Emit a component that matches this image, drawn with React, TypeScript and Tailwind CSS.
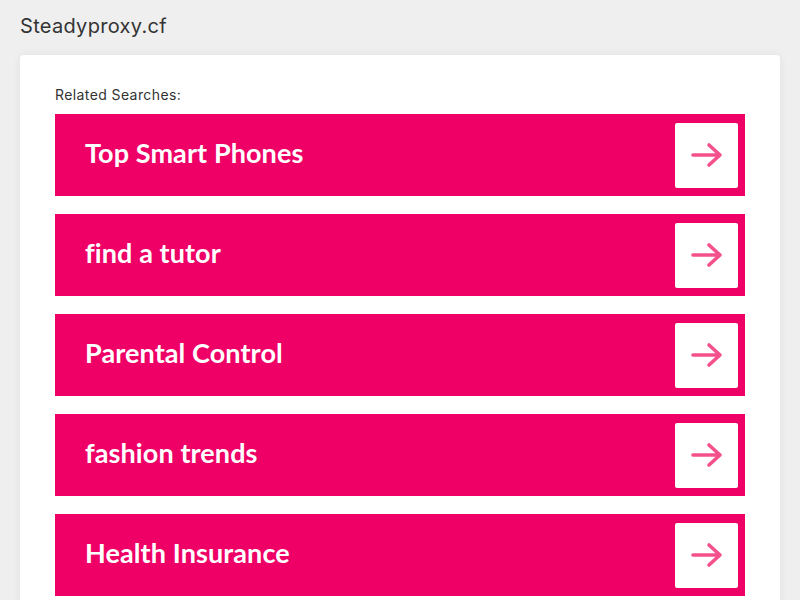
import React from 'react';

const searches = ['Top Smart Phones', 'find a tutor', 'Parental Control', 'fashion trends', 'Health Insurance'];

function Arrow() {
  return (
    <svg width="34" height="26" viewBox="0 0 34 26" fill="none">
      <path d="M3 13H30M19 3L30 13L19 23" stroke="#f4508c" strokeWidth="3.6" strokeLinecap="round" strokeLinejoin="round" />
    </svg>
  );
}

export default function App() {
  return (
    <div className="min-h-[600px] bg-[#efefef] font-['Inter',sans-serif]">
      <div className="h-[55px] px-5 pt-[13px]">
        <h1 className="text-[20px] leading-[26px] text-[#333] tracking-[0.3px]">Steadyproxy.cf</h1>
      </div>
      <div className="mx-5 bg-white rounded-[4px] shadow-[0_0_8px_rgba(0,0,0,0.06)] px-[35px] pt-[31px] pb-10">
        <p className="text-[14px] leading-[18px] text-[#333] tracking-[0.4px] mb-[10px]">Related Searches:</p>
        <div className="flex flex-col gap-[18px]">
          {searches.map((s) => (
            <a key={s} href="#" className="flex items-center justify-between h-[82px] bg-[#ee0066] pl-[30px] pr-[7px]">
              <span className="font-['Lato',sans-serif] font-bold text-[27px] text-white tracking-[0.1px] -mt-[3px]">{s}</span>
              <span className="w-[63px] h-[65px] bg-white rounded-[2px] flex items-center justify-center">
                <Arrow />
              </span>
            </a>
          ))}
        </div>
      </div>
    </div>
  );
}
